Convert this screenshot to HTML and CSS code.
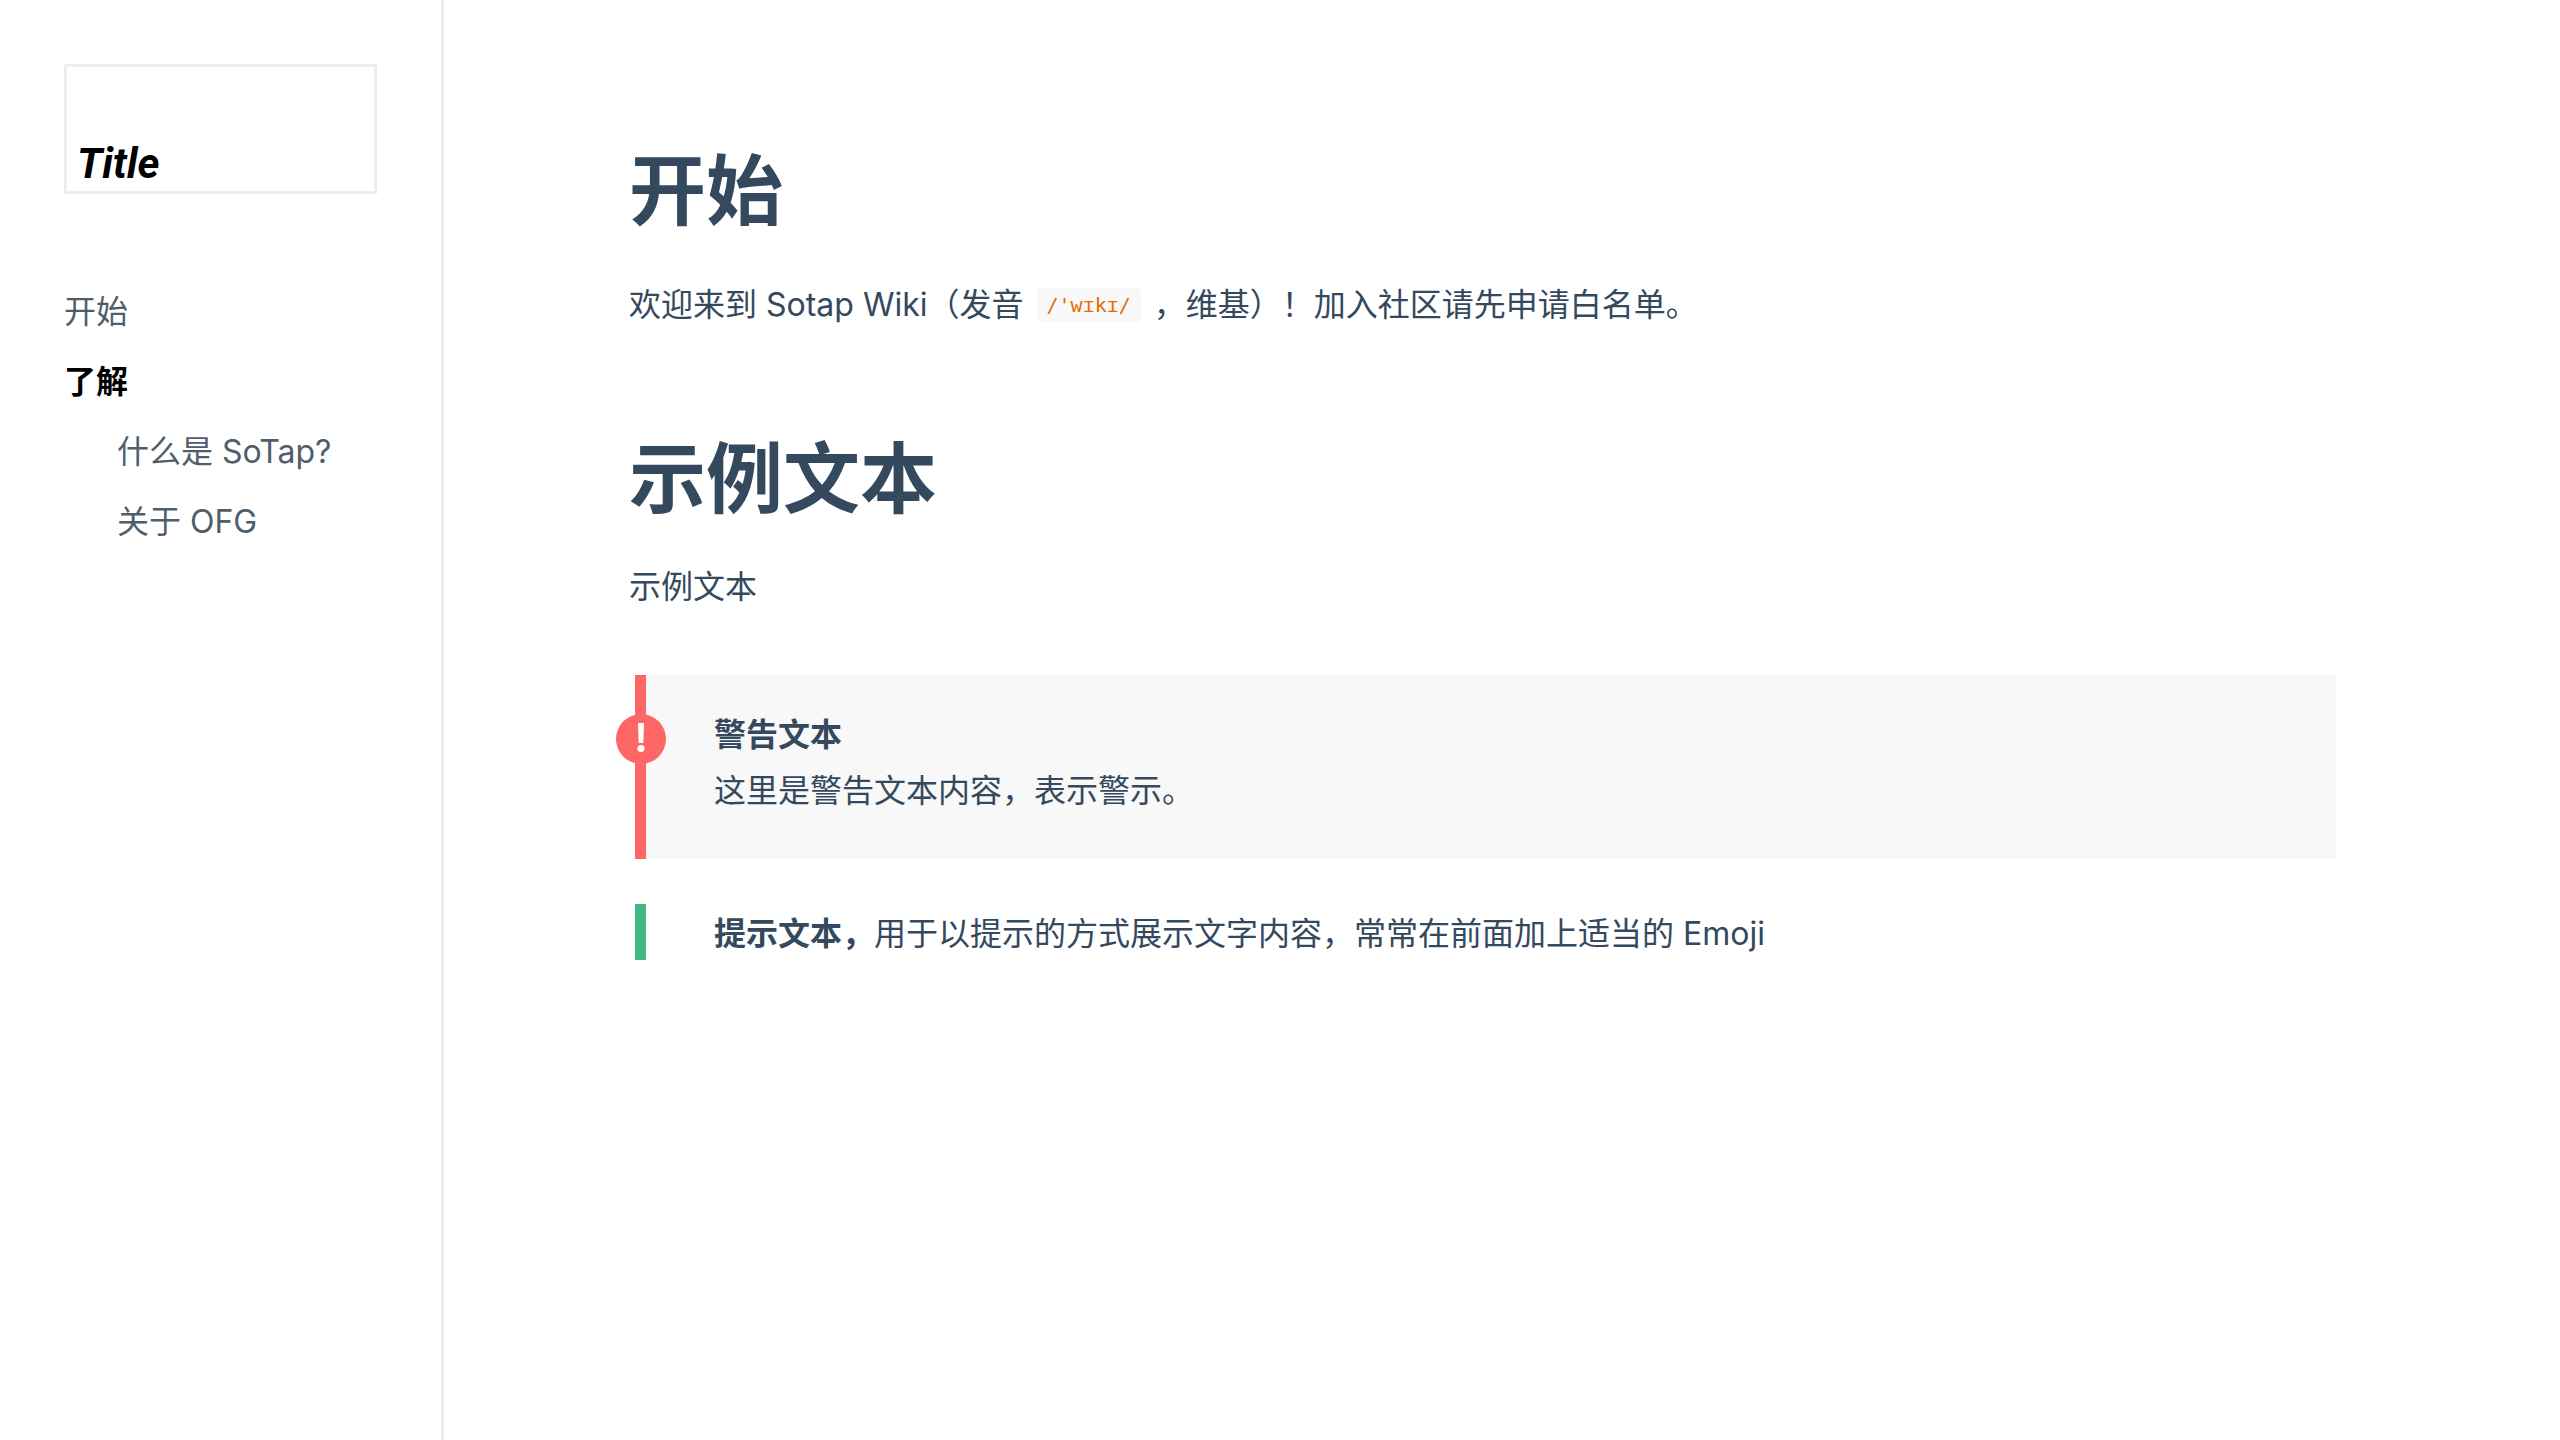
FILE: index.html
```html
<!DOCTYPE html>
<html lang="zh-CN">
<head>
<meta charset="utf-8">
<meta name="viewport" content="width=device-width, initial-scale=1">
<title>Sotap Wiki</title>
<link rel="stylesheet" href="styles.css">
</head>
<body>
<div class="layout">
  <aside class="sidebar">
    <a class="brand" href="#start">Title</a>
    <nav>
      <ul class="nav-list">
        <li><a href="#start">开始</a></li>
        <li>
          <strong class="nav-group">了解</strong>
          <ul class="nav-sublist">
            <li><a href="#what">什么是 SoTap?</a></li>
            <li><a href="#ofg">关于 OFG</a></li>
          </ul>
        </li>
      </ul>
    </nav>
  </aside>
  <main class="content">
    <section id="start">
      <h1>开始</h1>
      <p class="lead">欢迎来到 Sotap Wiki（发音 <code>/'wɪkɪ/</code> ，维基）！加入社区请先申请白名单。</p>
    </section>
    <section>
      <h1>示例文本</h1>
      <p>示例文本</p>
    </section>
    <div class="callout callout-warning">
      <svg class="callout-icon" viewBox="0 0 50 50" aria-hidden="true">
        <circle cx="25" cy="25" r="25" fill="#f66"/>
        <path d="M22 9h6l-.7 20h-4.600z" fill="#fff"/>
        <circle cx="25" cy="34.500" r="3.600" fill="#fff"/>
      </svg>
      <strong>警告文本</strong>
      <p>这里是警告文本内容，表示警示。</p>
    </div>
    <blockquote class="callout callout-tip">
      <p><strong>提示文本，</strong>用于以提示的方式展示文字内容，常常在前面加上适当的 Emoji</p>
    </blockquote>
  </main>
</div>
</body>
</html>
```

FILE: styles.css
```css
* {
  box-sizing: border-box;
}

body {
  margin: 0;
  background: #fff;
  color: #34495e;
  font-family: Inter, "Noto Sans CJK SC", sans-serif;
  font-size: 32px;
  line-height: 56px;
}

.layout {
  display: flex;
  min-height: 100vh;
}

.sidebar {
  flex: 0 0 444px;
  padding: 64px;
  border-right: 3px solid #eee;
}

.brand {
  display: flex;
  align-items: flex-end;
  height: 130px;
  padding: 0 10px;
  border: 3px solid #eee;
  color: #000;
  font-family: Roboto, sans-serif;
  font-size: 42px;
  font-style: italic;
  font-weight: 700;
  line-height: 54px;
  text-decoration: none;
}

.nav-list,
.nav-sublist {
  display: flex;
  flex-direction: column;
  gap: 14px;
  margin: 0;
  padding: 0;
  list-style: none;
}

.nav-list {
  margin-top: 90px;
}

.nav-sublist {
  margin-top: 14px;
  padding-left: 53px;
}

.nav-list a {
  display: block;
  color: #505d6b;
  text-decoration: none;
}

.nav-group {
  display: block;
  color: #000;
}

.content {
  flex: 1;
  min-width: 0;
  padding: 129px 224px 64px 185px;
}

section {
  margin-bottom: 84px;
}

section + section {
  margin-bottom: 60px;
}

h1 {
  margin: 0 0 18px;
  font-size: 77px;
  font-weight: 700;
  line-height: 124px;
}

p {
  margin: 0;
}

.lead {
  padding-top: 6px;
}

code {
  margin: 0 4px;
  padding: 5px 10px;
  border-radius: 4px;
  background: #f8f8f8;
  color: #e96900;
  font-family: "DejaVu Sans Mono", monospace;
  font-size: 20px;
  vertical-align: 4px;
}

.callout {
  position: relative;
  margin: 0 0 45px 6px;
  padding-left: 68px;
  border-left: 11px solid #42b983;
}

.callout-warning {
  padding-top: 32px;
  padding-bottom: 40px;
  border-left-color: #f66;
  background: #f8f8f8;
}

.callout-tip {
  padding-top: 4px;
  line-height: 52px;
}

.callout-icon {
  position: absolute;
  top: 39px;
  left: -30px;
  width: 50px;
  height: 50px;
}
```
